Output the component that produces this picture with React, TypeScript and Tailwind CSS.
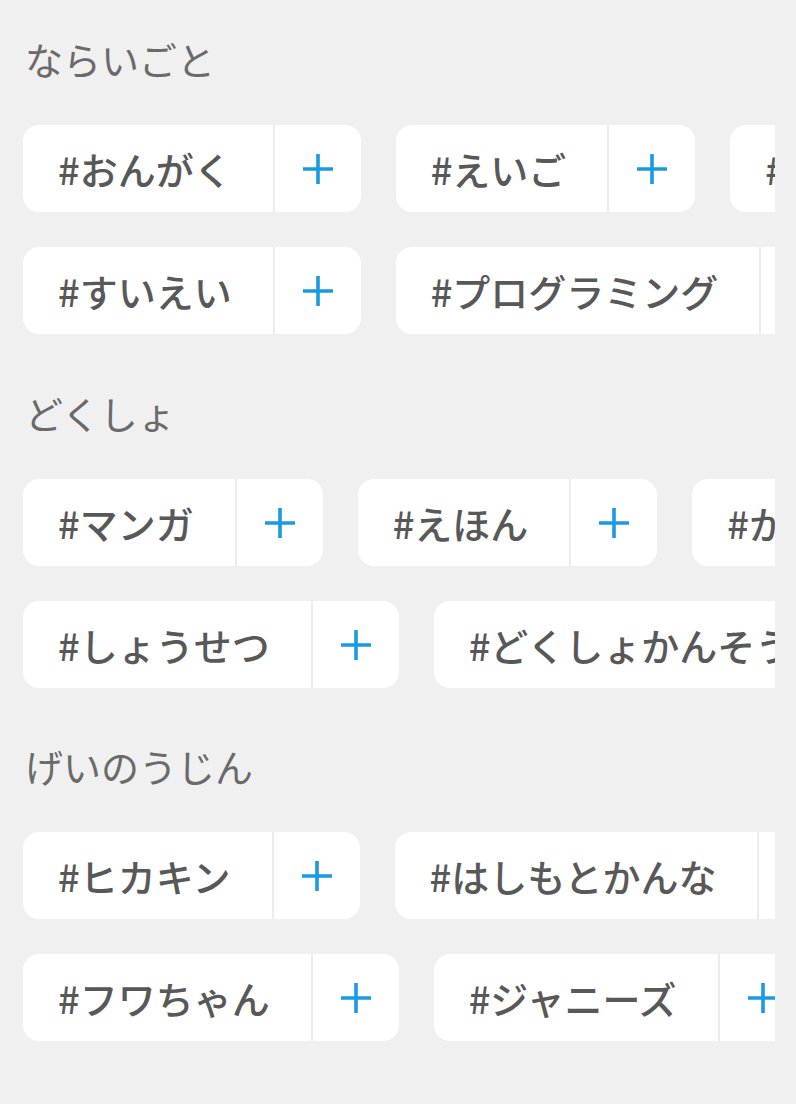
import React from "react";

const FONT = '"Hiragino Sans", "Noto Sans CJK JP", "Noto Sans", sans-serif';

function Plus() {
  return (
    <svg width="30" height="30" viewBox="0 0 30 30" aria-hidden="true">
      <path d="M15 0V30M0 15H30" stroke="#1a9ae3" strokeWidth="3.6" fill="none" />
    </svg>
  );
}

function Tag({ label }: { label: string }) {
  return (
    <div className="flex h-[87px] shrink-0 items-stretch rounded-[16px] bg-white">
      <div className="flex items-center whitespace-nowrap pl-[35px] pr-[41px] text-[38px] font-medium text-[#585858]">
        {label}
      </div>
      <div className="w-[2px] bg-[#ececec]" />
      <div className="flex w-[86px] items-center justify-center">
        <Plus />
      </div>
    </div>
  );
}

function Row({ tags }: { tags: string[] }) {
  return (
    <div className="flex gap-[35px] overflow-hidden">
      {tags.map((t) => (
        <Tag key={t} label={t} />
      ))}
    </div>
  );
}

function Section({ title, rows, className }: { title: string; rows: string[][]; className?: string }) {
  return (
    <section className={className}>
      <h2 className="flex h-[38px] items-center pl-[2px] text-[38px] font-normal text-[#6a6a6a]">{title}</h2>
      <div className="mt-[48px] flex flex-col gap-[35px]">
        {rows.map((r, i) => (
          <Row key={i} tags={r} />
        ))}
      </div>
    </section>
  );
}

export default function App() {
  return (
    <div className="min-h-screen bg-[#f0f0f0] pl-[23px] pr-[21px] pt-[39px]" style={{ fontFamily: FONT }}>
      <Section
        title="ならいごと"
        rows={[
          ["#おんがく", "#えいご", "#ダンス"],
          ["#すいえい", "#プログラミング", "#そろばん"],
        ]}
      />
      <Section
        className="mt-[59px]"
        title="どくしょ"
        rows={[
          ["#マンガ", "#えほん", "#かがく"],
          ["#しょうせつ", "#どくしょかんそうぶん"],
        ]}
      />
      <Section
        className="mt-[58px]"
        title="げいのうじん"
        rows={[
          ["#ヒカキン", "#はしもとかんな", "#あいみょん"],
          ["#フワちゃん", "#ジャニーズ", "#よしもと"],
        ]}
      />
    </div>
  );
}
